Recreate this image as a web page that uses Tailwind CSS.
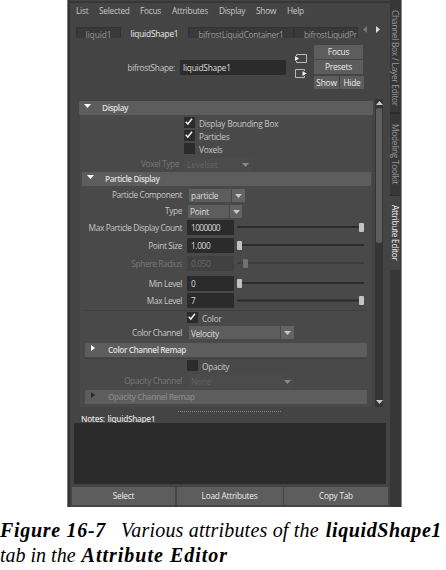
<!DOCTYPE html>
<html lang="en"><head><meta charset="utf-8"><title>Attribute Editor</title>
<script src="https://cdn.jsdelivr.net/npm/@tailwindcss/browser@4"></script></head>
<body class="w-[446px] h-[570px] overflow-hidden bg-white">
<svg class="hidden"><defs>
<symbol id="down" viewBox="0 0 7 4"><path d="M0 0h7L3.5 4z" fill="currentColor"/></symbol>
<symbol id="check" viewBox="0 0 11 11"><path d="M1.7 4.8 3.8 7 8 1.8" fill="none" stroke="#eee" stroke-width="1.5"/></symbol>
</defs></svg>
<div class="ml-[67px] w-[335px] h-[507px] flex bg-[#444] border-r border-[#888] font-['Open_Sans',sans-serif] text-[8.3px] leading-[12px] tracking-[-0.37px] text-[#c8c8c8] whitespace-nowrap">
 <div class="w-[3px] bg-[#343434] border-l border-[#777] shrink-0"></div>
 <main class="w-[320px] shrink-0 flex flex-col">
  <div class="h-[3px] border-b-2 border-[#373737]"></div>
  <nav class="h-[24px] pl-[6px] pt-[2px] flex tracking-[-0.25px] font-medium">
   <span class="w-[23px]">List</span><span class="w-[41px]">Selected</span><span class="w-[32px]">Focus</span><span class="w-[47px]">Attributes</span><span class="w-[37px]">Display</span><span class="w-[31px]">Show</span><span>Help</span>
  </nav>
  <div class="h-[11px] pl-[6px] flex text-center leading-[13px] text-[#999] tracking-[-0.3px]">
   <div class="w-[45px] bg-[#393939] border border-b-0 border-[#323232] tracking-[-0.05px]">liquid1</div>
   <div class="w-[67px] text-[#eee] font-medium tracking-[-0.2px]">liquidShape1</div>
   <div class="w-[106px] bg-[#393939] border border-b-0 border-[#323232]">bifrostLiquidContainer1</div>
   <div class="w-[64px] bg-[#393939] border border-b-0 border-[#323232] pl-[9px] text-left">bifrostLiquidPr</div>
   <svg class="ml-[5px] mt-[-1px] w-[18px] h-[7px]" viewBox="0 0 18 7"><path d="M4 0v7L0 3.5z" fill="#777"/><path d="M13 0v7l4-3.5z" fill="#ddd"/></svg>
  </div>
  <div class="h-[61px] flex">
   <div class="w-[105px] pt-[24px] text-right tracking-[-0.3px]">bifrostShape:</div>
   <div class="ml-[5px] mt-[22px] w-[106px] h-[15px] bg-[#2b2b2b] rounded-[1px] pl-[3px] leading-[15px] tracking-[-0.2px] text-[#ddd]">liquidShape1</div>
   <svg class="ml-[9px] mt-[15px] w-[12px] h-[27px]" viewBox="0 0 12 27" fill="none" stroke="#bbb"><path d="M1.5 3V1.5h10v8h-10V8M9.500 18V16.500h-9v8h9V23"/><path d="M0 3v5l4-2.500zM7.500 18v5l4-2.500z" fill="#eee" stroke="none"/></svg>
   <div class="ml-[7px] mt-[7px] w-[50px] grid grid-cols-[25px_24px] gap-x-px gap-y-px auto-rows-[14px] text-center leading-[14px] text-[#eee] font-medium tracking-[-0.2px]">
    <div class="col-span-2 w-[49px] bg-[#5d5d5d]">Focus</div><div class="col-span-2 w-[49px] bg-[#5d5d5d]">Presets</div><div class="bg-[#5d5d5d] mt-px leading-[13px]">Show</div><div class="bg-[#5d5d5d] mt-px leading-[13px]">Hide</div>
   </div>
  </div>
  <div class="h-[308px] flex pl-[9px]">
   <section class="w-[294px] pt-[2px]">
    <div class="h-[14px] bg-[#5d5d5d] rounded-[1px] flex items-center text-[#ddd] font-semibold tracking-[-0.45px] leading-[14px]"><svg class="ml-[5px] mb-[4px] w-[7px] h-[4px] text-white"><use href="#down"/></svg><span class="ml-[11px]">Display</span></div>
    <div class="ml-px w-[292px] h-[292px] bg-[#494949]">
     <div class="h-[13px] pl-[104px] pt-[2px] flex"><svg class="w-[11px] h-[11px] bg-[#2b2b2b]"><use href="#check"/></svg><span class="ml-[4px] mt-px tracking-[-0.25px]">Display Bounding Box</span></div>
     <div class="h-[13px] pl-[104px] pt-[2px] flex"><svg class="w-[11px] h-[11px] bg-[#2b2b2b]"><use href="#check"/></svg><span class="ml-[4px] mt-px tracking-[-0.25px]">Particles</span></div>
     <div class="h-[13px] pl-[104px] pt-[2px] flex"><div class="w-[11px] h-[11px] bg-[#2b2b2b]"></div><span class="ml-[4px] mt-px tracking-[-0.25px]">Voxels</span></div>
     <div class="h-[18px] pt-[4px] flex text-[#777]"><span class="w-[99px] text-right">Voxel Type</span><div class="ml-[5px] w-[69px] h-[13px] bg-[#4b4b4b] flex items-center pl-[3px] text-[#636363]"><span class="w-[55px] tracking-[-0.1px]">Levelset</span><svg class="w-[7px] h-[4px] text-[#888]"><use href="#down"/></svg></div></div>
     <div class="ml-[2px] h-[14px] w-[289px] bg-[#5d5d5d] rounded-[1px] flex items-center text-[#ddd] font-semibold tracking-[-0.45px] leading-[14px]"><svg class="ml-[5px] mb-[4px] w-[7px] h-[4px] text-white"><use href="#down"/></svg><span class="ml-[11px]">Particle Display</span></div>
     <div class="h-[17px] pt-[3px] flex"><span class="w-[102px] text-right">Particle Component</span><div class="ml-[7px] w-[42px] h-[13px] bg-[#5d5d5d] pl-[2px] leading-[13px] tracking-[-0.2px] text-[#ddd]">particle</div><div class="ml-px w-[13px] h-[13px] bg-[#636363] grid place-items-center"><svg class="w-[7px] h-[4px]"><use href="#down"/></svg></div></div>
     <div class="h-[17px] pt-[2px] flex"><span class="w-[102px] text-right">Type</span><div class="ml-[6px] w-[41px] h-[13px] bg-[#5d5d5d] pl-[2px] leading-[13px] tracking-[-0.2px] text-[#ddd]">Point</div><div class="ml-px w-[12px] h-[13px] bg-[#636363] grid place-items-center"><svg class="w-[7px] h-[4px]"><use href="#down"/></svg></div></div>
     <div class="h-[18px] flex items-start leading-[15px]"><span class="w-[102px] text-right">Max Particle Display Count</span><div class="ml-[5px] w-[47px] h-[15px] bg-[#2b2b2b] rounded-[1px] pl-[4px] leading-[16px] text-[#ddd] tracking-[-0.6px]">1000000</div><svg class="ml-[2px] w-[129px] h-[15px]"><path d="M1 7h127" stroke="#2b2b2b" stroke-width="2"/><rect x="123" y="3" width="5" height="9" rx="1" fill="#c2c2c2"/></svg></div>
     <div class="h-[18px] flex items-start leading-[15px]"><span class="w-[102px] text-right">Point Size</span><div class="ml-[5px] w-[47px] h-[15px] bg-[#2b2b2b] rounded-[1px] pl-[4px] leading-[16px] text-[#ddd]">1.000</div><svg class="ml-[2px] w-[129px] h-[15px]"><path d="M1 7h127" stroke="#2b2b2b" stroke-width="2"/><rect x="1" y="3" width="5" height="9" rx="1" fill="#c2c2c2"/></svg></div>
     <div class="h-[20px] flex items-start leading-[15px] text-[#777]"><span class="w-[102px] text-right">Sphere Radius</span><div class="ml-[5px] w-[47px] h-[15px] bg-[#414141] rounded-[1px] pl-[4px] leading-[16px] text-[#686868]">0.050</div><svg class="ml-[2px] w-[129px] h-[15px]"><path d="M1 7h127" stroke="#3d3d3d" stroke-width="2"/><rect x="7" y="3" width="5" height="9" rx="1" fill="#707070"/></svg></div>
     <div class="h-[17px] flex items-start leading-[15px]"><span class="w-[102px] text-right">Min Level</span><div class="ml-[5px] w-[47px] h-[15px] bg-[#2b2b2b] rounded-[1px] pl-[4px] leading-[16px] text-[#ddd]">0</div><svg class="ml-[2px] w-[129px] h-[15px]"><path d="M1 7h127" stroke="#2b2b2b" stroke-width="2"/><rect x="1" y="3" width="5" height="9" rx="1" fill="#c2c2c2"/></svg></div>
     <div class="h-[17px] flex items-start leading-[15px]"><span class="w-[102px] text-right">Max Level</span><div class="ml-[5px] w-[47px] h-[15px] bg-[#2b2b2b] rounded-[1px] pl-[4px] leading-[16px] text-[#ddd]">7</div><svg class="ml-[2px] w-[129px] h-[15px]"><path d="M1 7.500h127" stroke="#2b2b2b" stroke-width="2"/><rect x="123" y="3" width="5" height="9" rx="1" fill="#c2c2c2"/></svg></div>
     <div class="ml-[4px] w-[283px] h-[16px] border-t border-[#404040] pl-[103px] pt-px flex"><svg class="w-[11px] h-[11px] bg-[#2b2b2b]"><use href="#check"/></svg><span class="ml-[4px] mt-px tracking-[-0.2px]">Color</span></div>
     <div class="h-[17px] flex"><span class="mt-px w-[102px] text-right">Color Channel</span><div class="ml-[7px] w-[91px] h-[13px] bg-[#5d5d5d] pl-[2px] leading-[15px] tracking-[-0.25px] text-[#ddd]">Velocity</div><div class="ml-px w-[13px] h-[13px] bg-[#636363] grid place-items-center"><svg class="w-[7px] h-[4px]"><use href="#down"/></svg></div></div>
     <div class="ml-[5px] h-[14px] w-[282px] bg-[#5d5d5d] rounded-[1px] flex items-center text-[#ddd] font-semibold tracking-[-0.45px] leading-[14px]"><svg class="ml-[6px] mb-[4px] w-[4px] h-[6px]"><path d="M0 0v6l4-3z" fill="#fff"/></svg><span class="ml-[13px]">Color Channel Remap</span></div>
     <div class="ml-[4px] w-[283px] mt-px h-[17px] border-t border-[#404040] pl-[103px] pt-px flex"><div class="w-[11px] h-[11px] bg-[#2b2b2b]"></div><span class="ml-[4px] mt-px tracking-[-0.3px]">Opacity</span></div>
     <div class="h-[15px] flex text-[#777]"><span class="w-[102px] text-right">Opacity Channel</span><div class="ml-[7px] w-[105px] h-[13px] bg-[#4b4b4b] pl-[2px] flex items-center text-[#636363]"><span class="w-[93px] tracking-[-0.2px]">None</span><svg class="w-[7px] h-[4px] text-[#888]"><use href="#down"/></svg></div></div>
     <div class="ml-[5px] h-[14px] w-[282px] bg-[#5d5d5d] rounded-[1px] flex items-center text-[#858585] font-semibold tracking-[-0.45px] leading-[14px]"><svg class="ml-[6px] mb-[4px] w-[4px] h-[6px]"><path d="M0 0v6l4-3z" fill="#2b2b2b"/></svg><span class="ml-[13px]">Opacity Channel Remap</span></div>
    </div>
   </section>
   <div class="ml-[2px] w-[8px] bg-[#353535] flex flex-col items-center"><svg class="mt-[2px] w-[7px] h-[4px] rotate-180 shrink-0"><use href="#down"/></svg><div class="mt-[3px] w-[6px] h-[135px] bg-[#5d5d5d] rounded-[2px]"></div><svg class="mt-auto mb-[3px] w-[7px] h-[4px]"><use href="#down"/></svg></div>
  </div>
  <div class="h-[6px] flex"><div class="ml-[108px] mt-[4px] w-[104px] h-px bg-[repeating-linear-gradient(90deg,#888_0_1px,transparent_1px_2px)]"></div></div>
  <div class="h-[10px] pl-[11px] leading-[11px] text-[#ddd] font-semibold tracking-[-0.36px]">Notes: <span class="ml-px">liquidShape1</span></div>
  <div class="ml-[4px] w-[312px] h-[61px] bg-[#2b2b2b]"></div>
  <div class="ml-[2px] mt-[3px] h-[17px] w-[316px] grid grid-cols-[103px_106px_104px] gap-x-[1.500px] text-center leading-[18px] text-[#eee] font-medium tracking-[-0.25px]"><div class="bg-[#5d5d5d]">Select</div><div class="bg-[#5d5d5d]">Load Attributes</div><div class="bg-[#5d5d5d]">Copy Tab</div></div>
 </main>
 <aside class="w-[11px] shrink-0 bg-[#373737] text-[#999] leading-[10px] tracking-[-0.25px]">
  <div class="h-[114px] pt-[10px] border-b-2 border-[#2c2c2c] [writing-mode:vertical-rl]">Channel Box / Layer Editor</div>
  <div class="h-[82px] pt-[10px] border-b border-[#2c2c2c] [writing-mode:vertical-rl]">Modeling Toolkit</div>
  <div class="h-[74px] pt-[9px] w-[10px] bg-[#444] text-[#eee] [writing-mode:vertical-rl]">Attribute Editor</div>
 </aside>
</div>
<p class="pt-[11px] w-[446px] font-['Liberation_Serif',serif] italic text-[20px] leading-[25px] text-black whitespace-nowrap"><b class="tracking-[0.7px]">Figure 16-7</b><span class="ml-[15px] tracking-[0.2px]">Various attributes of the</span> <b class="ml-[2px] tracking-[0.6px]">liquidShape1</b><br>tab in the <b class="tracking-[1px] ml-px">Attribute Editor</b></p>
</body></html>
